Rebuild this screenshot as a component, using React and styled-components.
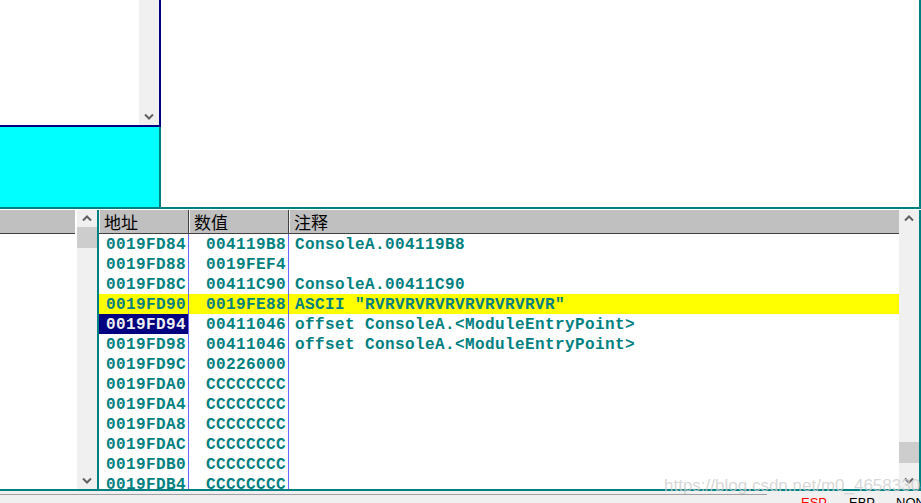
import React from 'react'
import styled, { createGlobalStyle } from 'styled-components'

const GlobalStyle = createGlobalStyle`
  html, body {
    margin: 0;
    padding: 0;
    background: #f0f0f0;
  }
  body {
    font-family: "Liberation Sans", Arial, sans-serif;
  }
`

const TEAL = '#008080'
const NAVY = '#000080'

const Screen = styled.div`
  position: relative;
  width: 921px;
  height: 503px;
  overflow: hidden;
  display: flex;
  flex-direction: column;
  background: #f0f0f0;
`

// top half: memory dump + cyan pane + white pane
const TopArea = styled.div`
  display: flex;
  flex-shrink: 0;
  height: 209px;
  box-sizing: border-box;
  border-bottom: 2px solid ${TEAL};
`
const LeftColumn = styled.div`
  width: 161px;
  display: flex;
  flex-direction: column;
`
const DumpPane = styled.div`
  height: 127px;
  box-sizing: border-box;
  display: flex;
  background: #fff;
  border-right: 2px solid ${NAVY};
  border-bottom: 2px solid ${NAVY};
`
const DumpBody = styled.div`
  flex: 1;
`
const CyanPane = styled.div`
  flex: 1;
  background: #00ffff;
  border-right: 2px solid ${TEAL};
`
const WhitePane = styled.div`
  flex: 1;
  background: #fff;
  border-right: 2px solid ${TEAL};
`

// scrollbars
const Scrollbar = styled.div`
  width: 20px;
  flex-shrink: 0;
  background: #f0f0f0;
  display: flex;
  flex-direction: column;
  align-items: center;
`
const Arrow = styled.div`
  height: 17px;
  width: 20px;
  display: flex;
  align-items: center;
  justify-content: center;
`
const Track = styled.div`
  flex: 1;
  width: 20px;
  display: flex;
  flex-direction: column;
  justify-content: ${p => p.$end ? 'flex-end' : 'flex-start'};
`
const Thumb = styled.div`
  width: 20px;
  height: 21px;
  background: #cdcdcd;
  margin-bottom: ${p => p.$mb || '0'};
`

const Chevron = ({ down }) => (
  <svg width="10" height="7" viewBox="0 0 10 7">
    <path
      d={down ? 'M1 1.5 L5 5.5 L9 1.5' : 'M1 5.5 L5 1.5 L9 5.5'}
      fill="none"
      stroke="#606060"
      strokeWidth="2"
    />
  </svg>
)

// bottom half: stack
const BottomArea = styled.div`
  display: flex;
  flex-shrink: 0;
  height: 282px;
  background: #fff;
  padding-top: 1px;
  box-sizing: border-box;
  border-bottom: 2px solid ${TEAL};
`
const SidePanel = styled.div`
  width: 99px;
  box-sizing: border-box;
  display: flex;
  border-right: 2px solid ${TEAL};
`
const SideBody = styled.div`
  flex: 1;
  margin-right: 2px;
`
const SideHeader = styled.div`
  height: 23px;
  background: #c0c0c0;
  border-bottom: 1px solid #404040;
`
const StackPane = styled.div`
  width: 800px;
  display: flex;
  flex-direction: column;
  overflow: hidden;
`
const HeaderRow = styled.div`
  display: flex;
  height: 24px;
  box-sizing: border-box;
  border-bottom: 1px solid #404040;
  background: #c0c0c0;
`
const HeaderCell = styled.div`
  width: ${p => p.$w};
  flex: ${p => p.$grow ? 1 : 'none'};
  box-sizing: border-box;
  padding-left: 4px;
  border-left: 1px solid #f0f0f0;
  border-right: ${p => p.$grow ? 'none' : '1px solid #404040'};
  font-family: "Noto Sans CJK SC", "Noto Sans", sans-serif;
  font-size: 17px;
  line-height: 23px;
  color: #000;
`
const Row = styled.div`
  display: flex;
  flex-shrink: 0;
  height: 20px;
  background: ${p => p.$hl ? '#ffff00' : 'transparent'};
`
const Cell = styled.div`
  width: ${p => p.$w};
  flex: ${p => p.$grow ? 1 : 'none'};
  box-sizing: border-box;
  padding-left: ${p => p.$pl};
  padding-top: 2px;
  border-right: ${p => p.$grow ? 'none' : '1px solid #6666ff'};
  background: ${p => p.$sel ? NAVY : 'transparent'};
  color: ${p => p.$sel ? '#f0f0f0' : TEAL};
  font-family: "Liberation Mono", "DejaVu Sans Mono", monospace;
  font-weight: bold;
  font-size: 16px;
  letter-spacing: 0.4px;
  line-height: 18px;
  white-space: pre;
`
const EdgeLine = styled.div`
  width: 2px;
  background: ${TEAL};
`

// status strip
const StatusBar = styled.div`
  flex: 1;
  display: flex;
  align-items: flex-start;
  padding-top: 3px;
  overflow: hidden;
`
const StatusBox = styled.div`
  width: 767px;
  flex-shrink: 0;
  border-top: 1px solid #a0a0a0;
`
const StatusText = styled.span`
  font-size: 13px;
  line-height: 13px;
  margin-left: ${p => p.$ml};
  margin-top: 2px;
  color: ${p => p.$red ? '#ff0000' : '#000'};
`
const Watermark = styled.div`
  position: absolute;
  left: 664px;
  top: 476px;
  font-family: "Liberation Sans", Arial, sans-serif;
  font-size: 17px;
  color: rgba(205, 205, 205, 0.8);
  white-space: nowrap;
`

const rows = [
  ['0019FD84', '004119B8', 'ConsoleA.004119B8'],
  ['0019FD88', '0019FEF4', ''],
  ['0019FD8C', '00411C90', 'ConsoleA.00411C90'],
  ['0019FD90', '0019FE88', 'ASCII "RVRVRVRVRVRVRVRVRVR"'],
  ['0019FD94', '00411046', 'offset ConsoleA.<ModuleEntryPoint>'],
  ['0019FD98', '00411046', 'offset ConsoleA.<ModuleEntryPoint>'],
  ['0019FD9C', '00226000', ''],
  ['0019FDA0', 'CCCCCCCC', ''],
  ['0019FDA4', 'CCCCCCCC', ''],
  ['0019FDA8', 'CCCCCCCC', ''],
  ['0019FDAC', 'CCCCCCCC', ''],
  ['0019FDB0', 'CCCCCCCC', ''],
  ['0019FDB4', 'CCCCCCCC', ''],
]

const App = () => {
  return (
    <Screen>
      <GlobalStyle />
      <TopArea>
        <LeftColumn>
          <DumpPane>
            <DumpBody />
            <Scrollbar>
              <Track $end>
                <Arrow><Chevron down /></Arrow>
              </Track>
            </Scrollbar>
          </DumpPane>
          <CyanPane />
        </LeftColumn>
        <WhitePane />
      </TopArea>

      <BottomArea>
        <SidePanel>
          <SideBody>
            <SideHeader />
          </SideBody>
          <Scrollbar>
            <Arrow><Chevron /></Arrow>
            <Track>
              <Thumb />
            </Track>
            <Arrow><Chevron down /></Arrow>
          </Scrollbar>
        </SidePanel>

        <StackPane>
          <HeaderRow>
            <HeaderCell $w="90px">地址</HeaderCell>
            <HeaderCell $w="100px">数值</HeaderCell>
            <HeaderCell $grow>注释</HeaderCell>
          </HeaderRow>
          {rows.map((r, i) => (
            <Row key={r[0]} $hl={i === 3}>
              <Cell $w="90px" $pl="7px" $sel={i === 4}>{r[0]}</Cell>
              <Cell $w="100px" $pl="17px">{r[1]}</Cell>
              <Cell $grow $pl="6px">{r[2]}</Cell>
            </Row>
          ))}
        </StackPane>

        <Scrollbar>
          <Arrow><Chevron /></Arrow>
          <Track $end>
            <Thumb $mb="9px" />
          </Track>
          <Arrow><Chevron down /></Arrow>
        </Scrollbar>
        <EdgeLine />
      </BottomArea>

      <StatusBar>
        <StatusBox />
        <StatusText $red $ml="34px">ESP</StatusText>
        <StatusText $ml="22px">EBP</StatusText>
        <StatusText $ml="21px">NONE</StatusText>
      </StatusBar>

      <Watermark>https://blog.csdn.net/m0_46583304</Watermark>
    </Screen>
  )
}

export default App
